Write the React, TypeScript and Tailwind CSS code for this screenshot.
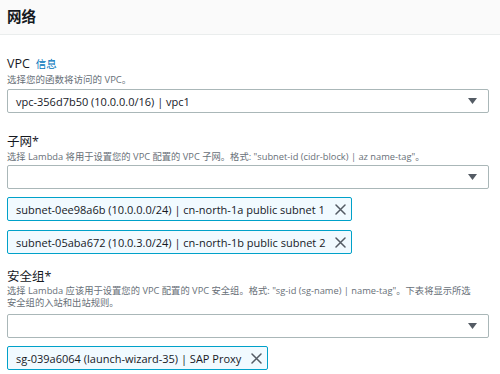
import React from 'react';

const FONT = "font-['Open_Sans','Noto_Sans_CJK_SC',sans-serif]";

const Caret: React.FC = () => (
  <svg width="9" height="6" viewBox="0 0 9 6" className="shrink-0">
    <path d="M0 0 H9 L4.5 6 Z" fill="#545b64" />
  </svg>
);

const CloseIcon: React.FC = () => (
  <svg width="11" height="11" viewBox="0 0 11 11" className="shrink-0">
    <path d="M1 1 L10 10 M10 1 L1 10" stroke="#545b64" strokeWidth="1.5" strokeLinecap="round" />
  </svg>
);

const Select: React.FC<{ value?: string; className?: string }> = ({ value, className = '' }) => (
  <div
    className={`flex h-[24px] w-[482px] items-center justify-between border border-[#aab7b8] bg-white pl-[8px] pr-[11px] rounded-[2px] ${className}`}
  >
    <span className="text-[11px] text-[#16191f] leading-none">{value}</span>
    <Caret />
  </div>
);

const Token: React.FC<{ text: string; className?: string }> = ({ text, className = '' }) => (
  <div
    className={`flex h-[24px] w-fit items-center gap-[10px] border border-[#00a1c9] bg-[#f1faff] pl-[8px] pr-[5px] rounded-[2px] ${className}`}
  >
    <span className="text-[11px] text-[#16191f] leading-none">{text}</span>
    <CloseIcon />
  </div>
);

const App: React.FC = () => {
  return (
    <div className={`w-[500px] h-[374px] overflow-hidden bg-white ${FONT}`}>
      <div className="h-[35px] bg-[#fafafa] border-b border-[#eaeded] flex items-center px-[7px]">
        <h2 className="text-[14.5px] font-bold text-[#16191f] leading-none">网络</h2>
      </div>

      <div className="px-[7px] pt-[20px]">
        <div className="flex items-baseline gap-[6px] leading-[17px]">
          <span className="text-[12.5px] text-[#16191f]">VPC</span>
          <span className="text-[10.5px] text-[#0073bb]">信息</span>
        </div>
        <p className="text-[9.5px] leading-[13px] text-[#687078]">选择您的函数将访问的 VPC。</p>
        <Select value="vpc-356d7b50 (10.0.0.0/16) | vpc1" className="mt-[3px]" />

        <div className="mt-[20px] text-[12.5px] leading-[17px] text-[#16191f]">子网*</div>
        <p className="text-[9.3px] leading-[13px] text-[#687078]">
          选择 Lambda 将用于设置您的 VPC 配置的 VPC 子网。格式: "subnet-id (cidr-block) | az name-tag"。
        </p>
        <Select className="mt-[2px]" />
        <Token text="subnet-0ee98a6b (10.0.0.0/24) | cn-north-1a public subnet 1" className="mt-[8px]" />
        <Token text="subnet-05aba672 (10.0.3.0/24) | cn-north-1b public subnet 2" className="mt-[9px]" />

        <div className="mt-[14px] text-[12.5px] leading-[17px] text-[#16191f]">安全组*</div>
        <p className="text-[9.3px] leading-[12px] text-[#687078] w-[470px]">
          选择 Lambda 应该用于设置您的 VPC 配置的 VPC 安全组。格式: "sg-id (sg-name) | name-tag"。下表将显示所选安全组的入站和出站规则。
        </p>
        <Select className="mt-[5px]" />
        <Token text="sg-039a6064 (launch-wizard-35) | SAP Proxy" className="mt-[8px]" />
      </div>
    </div>
  );
};

export default App;
